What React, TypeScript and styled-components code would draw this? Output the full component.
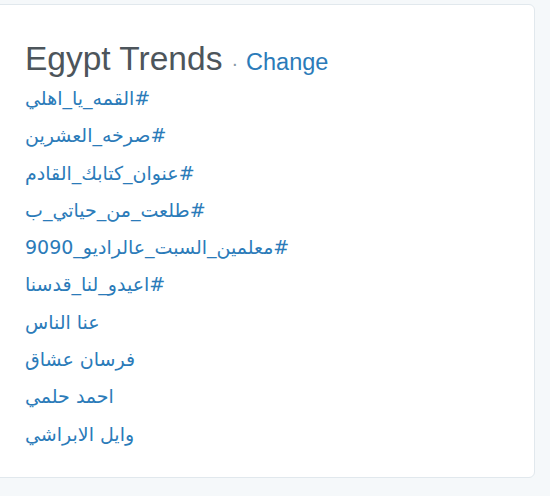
import styled, { createGlobalStyle } from 'styled-components';

const GlobalStyle = createGlobalStyle`
  html, body {
    margin: 0;
    padding: 0;
    background: #f5f8fa;
    font-family: "Liberation Sans", Arial, "DejaVu Sans", sans-serif;
    overflow: hidden;
  }
`;

const Page = styled.div`
  width: 550px;
  height: 496px;
  padding-top: 4px;
  box-sizing: border-box;
`;

const Card = styled.section`
  margin-left: -10px;
  width: 545px;
  height: 474px;
  box-sizing: border-box;
  background: #fff;
  border: 1px solid #e1e8ed;
  border-radius: 6px;
  padding: 35px 20px 0 34px;
`;

const Header = styled.h3`
  margin: 0 0 2px;
  display: flex;
  align-items: baseline;
  font-weight: normal;
  white-space: nowrap;
`;

const Title = styled.span`
  font-size: 33.5px;
  color: #4d555b;
`;

const Dot = styled.span`
  font-size: 20px;
  color: #8899a6;
  margin: 0 8px 0 9px;
`;

const ChangeLink = styled.a`
  font-size: 23.5px;
  color: #2b7bb9;
  text-decoration: none;
`;

const TrendList = styled.ul`
  list-style: none;
  margin: 0;
  padding: 0;
`;

const Trend = styled.li`
  height: 37.3px;
  line-height: 37.3px;
  font-size: 20px;
`;

const TrendLink = styled.a`
  color: #2b7bb9;
  text-decoration: none;
  font-family: "DejaVu Sans", "Liberation Sans", sans-serif;
  font-size: 19px;
`;

const trends = [
  '#القمه_يا_اهلي',
  '#صرخه_العشرين',
  '#عنوان_كتابك_القادم',
  '#طلعت_من_حياتي_ب',
  '#معلمين_السبت_عالراديو_9090',
  '#اعيدو_لنا_قدسنا',
  'عنا الناس',
  'فرسان عشاق',
  'احمد حلمي',
  'وايل الابراشي',
];

function App() {
  return (
    <Page>
      <GlobalStyle />
      <Card>
        <Header>
          <Title>Egypt Trends</Title>
          <Dot>·</Dot>
          <ChangeLink href="#">Change</ChangeLink>
        </Header>
        <TrendList>
          {trends.map((t) => (
            <Trend key={t}>
              <TrendLink href="#" dir="rtl">
                {t}
              </TrendLink>
            </Trend>
          ))}
        </TrendList>
      </Card>
    </Page>
  );
}

export default App;
